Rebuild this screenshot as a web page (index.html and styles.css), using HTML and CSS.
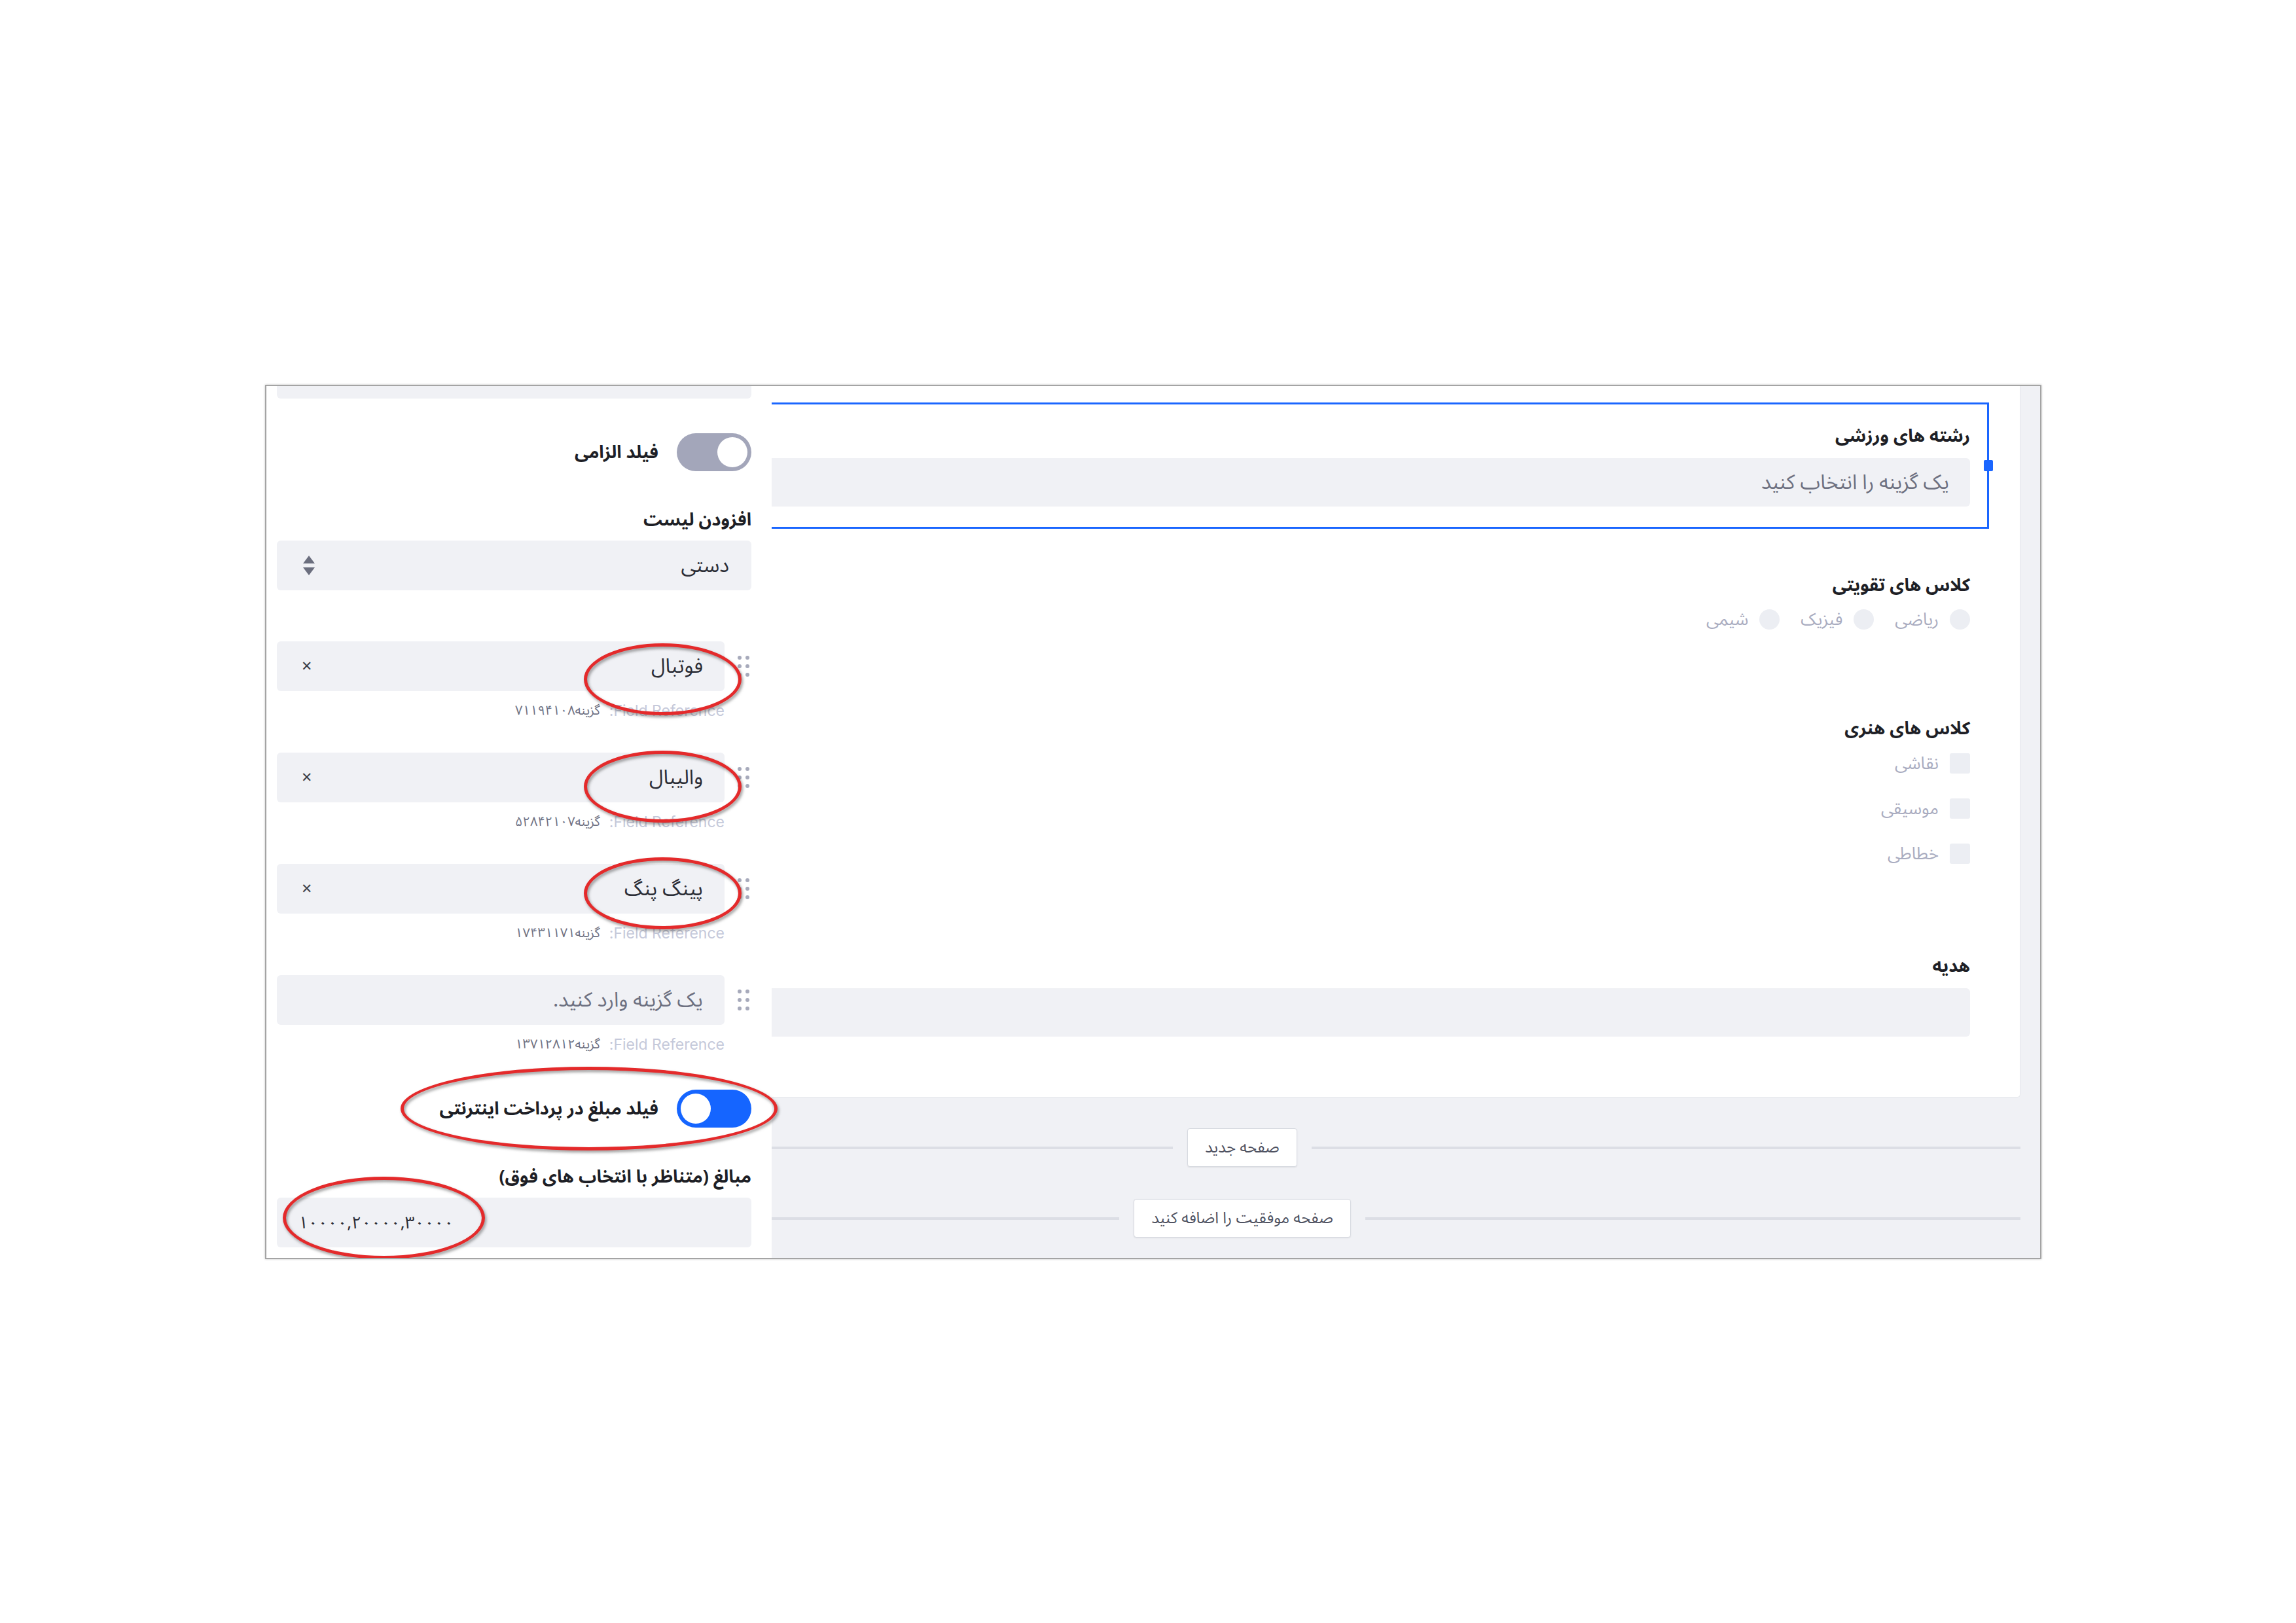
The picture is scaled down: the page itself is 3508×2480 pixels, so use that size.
FILE: index.html
```html
<!DOCTYPE html>
<html lang="fa">
<head>
    <meta charset="UTF-8">
    <title>فرم ساز</title>
    <link rel="stylesheet" href="styles.css">
</head>
<body>
    <div class="frame">
        <aside class="sidebar">
            <div class="input stub"></div>

            <div class="switch-row">
                <span class="switch"><span class="knob"></span></span>
                <span class="switch-label">فیلد الزامی</span>
            </div>

            <div class="label list-label">افزودن لیست</div>
            <div class="input select">
                <span>دستی</span>
                <svg class="arrows" viewBox="0 0 22 32" width="22" height="32">
                    <path d="M11 1 L20 13 H2 Z M11 31 L20 19 H2 Z" fill="#6b6e7e"/>
                </svg>
            </div>

            <div class="options">
                <div class="option">
                    <div class="option-row">
                        <span class="grip"><i></i><i></i><i></i><i></i><i></i><i></i></span>
                        <div class="input option-input"><span>فوتبال</span><span class="remove">×</span></div>
                    </div>
                    <div class="ref"><span class="ref-key">Field Reference:</span><span class="ref-val">گزینه۷۱۱۹۴۱۰۸</span></div>
                </div>
                <div class="option">
                    <div class="option-row">
                        <span class="grip"><i></i><i></i><i></i><i></i><i></i><i></i></span>
                        <div class="input option-input"><span>والیبال</span><span class="remove">×</span></div>
                    </div>
                    <div class="ref"><span class="ref-key">Field Reference:</span><span class="ref-val">گزینه۵۲۸۴۲۱۰۷</span></div>
                </div>
                <div class="option">
                    <div class="option-row">
                        <span class="grip"><i></i><i></i><i></i><i></i><i></i><i></i></span>
                        <div class="input option-input"><span>پینگ پنگ</span><span class="remove">×</span></div>
                    </div>
                    <div class="ref"><span class="ref-key">Field Reference:</span><span class="ref-val">گزینه۱۷۴۳۱۱۷۱</span></div>
                </div>
                <div class="option">
                    <div class="option-row">
                        <span class="grip"><i></i><i></i><i></i><i></i><i></i><i></i></span>
                        <div class="input option-input"><span class="placeholder">یک گزینه وارد کنید.</span></div>
                    </div>
                    <div class="ref"><span class="ref-key">Field Reference:</span><span class="ref-val">گزینه۱۳۷۱۲۸۱۲</span></div>
                </div>
            </div>

            <div class="switch-row pay-row">
                <span class="switch on"><span class="knob"></span></span>
                <span class="switch-label">فیلد مبلغ در پرداخت اینترنتی</span>
            </div>

            <div class="label amount-label">مبالغ (متناظر با انتخاب های فوق)</div>
            <div class="input amount">۱۰۰۰۰,۲۰۰۰۰,۳۰۰۰۰</div>
        </aside>

        <main class="canvas">
            <div class="stage">
                <div class="card">
                    <div class="field selected">
                        <span class="handle"></span>
                        <div class="label">رشته های ورزشی</div>
                        <div class="input wide"><span class="placeholder">یک گزینه را انتخاب کنید</span></div>
                    </div>

                    <div class="field radio-field">
                        <div class="label">کلاس های تقویتی</div>
                        <div class="radios">
                            <span class="choice"><span class="dot"></span>ریاضی</span>
                            <span class="choice"><span class="dot"></span>فیزیک</span>
                            <span class="choice"><span class="dot"></span>شیمی</span>
                        </div>
                    </div>

                    <div class="field check-field">
                        <div class="label">کلاس های هنری</div>
                        <div class="checks">
                            <span class="choice"><span class="box"></span>نقاشی</span>
                            <span class="choice"><span class="box"></span>موسیقی</span>
                            <span class="choice"><span class="box"></span>خطاطی</span>
                        </div>
                    </div>

                    <div class="field gift-field">
                        <div class="label">هدیه</div>
                        <div class="input wide"></div>
                    </div>
                </div>

                <div class="page-break first">
                    <span class="line"></span>
                    <span class="page-btn">صفحه جدید</span>
                    <span class="line"></span>
                </div>
                <div class="page-break">
                    <span class="line"></span>
                    <span class="page-btn">صفحه موفقیت را اضافه کنید</span>
                    <span class="line"></span>
                </div>
            </div>
        </main>

        <!-- red marks drawn over the screenshot -->
        <span class="mark mark-1"></span>
        <span class="mark mark-2"></span>
        <span class="mark mark-3"></span>
        <span class="mark mark-4"></span>
        <span class="mark mark-5"></span>
    </div>
</body>
</html>
```

FILE: styles.css
```css
* {
    margin: 0;
    padding: 0;
    box-sizing: border-box;
}

body {
    width: 3508px;
    height: 2480px;
    background: #ffffff;
    padding: 588px 0 0 405px;
    font-family: "Noto Sans Arabic", "DejaVu Sans", "Noto Sans", sans-serif;
    color: #23242c;
}

.frame {
    width: 2714px;
    height: 1336px;
    border: 2px solid #a4a4a4;
    box-shadow: 0 0 3px rgba(0, 0, 0, 0.25);
    display: flex;
    position: relative;
    overflow: hidden;
}

/* sidebar */
.sidebar {
    width: 772px;
    flex-shrink: 0;
    background: #ffffff;
    padding: 0 31px 0 16px;
    direction: rtl;
}

.input {
    height: 76px;
    background: #f0f1f5;
    border-radius: 6px;
    display: flex;
    align-items: center;
    font-size: 31px;
    color: #2b2d36;
}

.stub {
    margin-top: -57px;
}

.label {
    font-size: 27px;
    font-weight: bold;
    line-height: 36px;
    color: #1e1f26;
}

.switch-row {
    display: flex;
    align-items: center;
    gap: 28px;
    height: 58px;
    margin-top: 53px;
}

.switch {
    width: 114px;
    height: 58px;
    border-radius: 29px;
    background: #a3a6ba;
    display: flex;
    align-items: center;
    padding: 0 6px;
    flex-shrink: 0;
}

.switch.on {
    background: #1565ff;
    justify-content: flex-end;
}

.knob {
    width: 46px;
    height: 46px;
    border-radius: 50%;
    background: #ffffff;
}

.switch-label {
    font-size: 27px;
    font-weight: bold;
    color: #1e1f26;
}

.list-label {
    margin-top: 57px;
}

.select {
    margin-top: 13px;
    justify-content: space-between;
    padding: 0 34px 0 38px;
}

.options {
    margin-top: 78px;
}

.option + .option {
    margin-top: 49px;
}

.option-row {
    display: flex;
    align-items: center;
    gap: 20px;
}

.grip {
    width: 18px;
    margin-right: 3px;
    display: grid;
    grid-template-columns: 6px 6px;
    column-gap: 6px;
    row-gap: 7px;
    flex-shrink: 0;
}

.grip i {
    width: 6px;
    height: 6px;
    border-radius: 50%;
    background: #a7aabb;
}

.option-input {
    flex: 1;
    justify-content: space-between;
    padding: 0 33px 0 38px;
}

.remove {
    font-size: 27px;
    color: #3a3d48;
}

.placeholder {
    color: #6d7080;
}

.ref {
    display: flex;
    align-items: center;
    gap: 14px;
    height: 30px;
    margin: 15px 41px 0 0;
}

.ref-key {
    font-family: "Inter", "Liberation Sans", sans-serif;
    font-size: 23px;
    color: #c5c9da;
}

.ref-val {
    font-size: 20px;
    color: #6f7283;
}

.pay-row {
    margin-top: 54px;
}

.amount-label {
    margin-top: 58px;
}

.amount {
    margin-top: 13px;
    direction: ltr;
    padding-left: 33px;
    font-size: 26px;
}

/* canvas */
.canvas {
    flex: 1;
    background: #f0f1f5;
    overflow: hidden;
}

.stage {
    margin-left: -470px;
}

.card {
    direction: rtl;
    background: #ffffff;
    margin-right: 30px;
    padding: 25px 47px 92px 0;
    border-right: 1px solid #e4e6eb;
    border-bottom: 1px solid #e4e6eb;
    border-radius: 0 0 5px 5px;
}

.field {
    padding-right: 29px;
}

.field .input {
    height: 74px;
    margin-top: 15px;
}

.wide {
    padding-right: 32px;
}

.selected {
    position: relative;
    border: 3px solid #1a66ff;
    padding: 31px 26px 31px 0;
}

.handle {
    position: absolute;
    right: -9px;
    top: 50%;
    width: 14px;
    height: 17px;
    margin-top: -9px;
    background: #1a66ff;
    border-radius: 2px;
}

.radio-field {
    margin-top: 69px;
}

.radios {
    display: flex;
    gap: 32px;
    margin-top: 15px;
}

.choice {
    display: flex;
    align-items: center;
    gap: 17px;
    height: 36px;
    font-size: 26px;
    color: #a9acc0;
}

.dot {
    width: 31px;
    height: 31px;
    border-radius: 50%;
    background: #eceef3;
}

.check-field {
    margin-top: 132px;
}

.checks {
    display: flex;
    flex-direction: column;
    gap: 33px;
    margin-top: 16px;
}

.box {
    width: 31px;
    height: 31px;
    border-radius: 3px;
    background: #eceef3;
}

.gift-field {
    margin-top: 137px;
}

.page-break {
    direction: rtl;
    display: flex;
    align-items: center;
    gap: 22px;
    margin: 49px 30px 0 0;
}

.page-break.first {
    margin-top: 47px;
}

.line {
    flex: 1;
    height: 4px;
    background: #dcdee5;
}

.page-btn {
    height: 59px;
    display: flex;
    align-items: center;
    padding: 0 26px;
    background: #ffffff;
    border: 1px solid #d6d9e0;
    border-radius: 4px;
    box-shadow: 0 1px 2px rgba(0, 0, 0, 0.08);
    font-size: 24px;
    color: #4f5261;
}

/* red annotation ellipses */
.mark {
    position: absolute;
    border: 5px solid #e42a2b;
    border-radius: 50%;
    filter: drop-shadow(2px 3px 2px rgba(70, 70, 70, 0.55));
}

.mark-1, .mark-2, .mark-3 {
    left: 485px;
    width: 241px;
    height: 110px;
}

.mark-1 { top: 393px; }
.mark-2 { top: 557px; }
.mark-3 { top: 720px; }

.mark-4 {
    left: 205px;
    top: 1040px;
    width: 576px;
    height: 128px;
}

.mark-5 {
    left: 25px;
    top: 1208px;
    width: 309px;
    height: 126px;
}
```
